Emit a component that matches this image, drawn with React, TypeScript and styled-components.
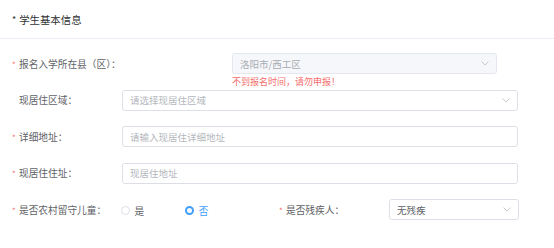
import React from "react";
import styled, { createGlobalStyle } from "styled-components";

const GlobalStyle = createGlobalStyle`
  body {
    margin: 0;
    background: #ffffff;
    font-family: "Noto Sans CJK SC", "Noto Sans", sans-serif;
  }
`;

const Page = styled.div`
  width: 554px;
  height: 248px;
  background: #fff;
  overflow: hidden;
`;

const Header = styled.div`
  height: 38px;
  padding: 0 12px;
  display: flex;
  align-items: center;
  border-bottom: 1px solid #ebeef5;
  font-size: 10.4px;
  color: #303133;
`;

const HeaderDot = styled.span`
  font-size: 9px;
  margin-right: 3px;
  color: #303133;
`;

const Form = styled.div`
  padding: 14px 0 0 12px;
  display: flex;
  flex-direction: column;
`;

const Row = styled.div<{ $tight?: boolean }>`
  display: flex;
  align-items: flex-start;
  margin-bottom: ${(p) => (p.$tight ? "0" : "15.5px")};
`;

const Column = styled.div<{ $width?: number }>`
  display: flex;
  align-items: flex-start;
  width: ${(p) => (p.$width ? `${p.$width}px` : "auto")};
`;

const Label = styled.div<{ $width?: number }>`
  width: ${(p) => p.$width ?? 110}px;
  flex-shrink: 0;
  display: flex;
  align-items: center;
  height: 21px;
  font-size: 9.7px;
  color: #606266;
  white-space: nowrap;
`;

const Star = styled.span`
  width: 7px;
  color: #f56c6c;
  font-size: 8px;
  line-height: 1;
  padding-top: 2px;
`;

const Field = styled.div<{ $width: number }>`
  width: ${(p) => p.$width}px;
  display: flex;
  flex-direction: column;
`;

const Box = styled.div<{ $disabled?: boolean }>`
  box-sizing: border-box;
  height: 21px;
  border: 1px solid ${(p) => (p.$disabled ? "#e4e7ed" : "#dcdfe6")};
  background: ${(p) => (p.$disabled ? "#f5f7fa" : "#fff")};
  border-radius: 2.7px;
  padding: 0 7px;
  display: flex;
  align-items: center;
  justify-content: space-between;
  font-size: 9.5px;
`;

const Value = styled.span<{ $tone: "placeholder" | "disabled" | "text" }>`
  color: ${(p) =>
    p.$tone === "text" ? "#606266" : p.$tone === "disabled" ? "#a8abb2" : "#b4b7bd"};
`;

const ErrorText = styled.div`
  height: 15.5px;
  line-height: 15.5px;
  font-size: 9px;
  color: #f56c6c;
`;

const Radios = styled.div`
  display: flex;
  align-items: center;
  height: 21px;
  padding-top: 1px;
  margin-left: -1px;
`;

const RadioItem = styled.div<{ $checked?: boolean }>`
  display: flex;
  align-items: center;
  margin-right: 41px;
  font-size: 9.7px;
  color: ${(p) => (p.$checked ? "#409eff" : "#606266")};
`;

const RadioDot = styled.span<{ $checked?: boolean }>`
  box-sizing: border-box;
  width: 9px;
  height: 9px;
  border-radius: 50%;
  margin-right: 4.5px;
  border: ${(p) => (p.$checked ? "2.6px solid #409eff" : "1px solid #dcdfe6")};
  background: #fff;
`;

const Chevron = () => (
  <svg width="8" height="5" viewBox="0 0 8 5" fill="none">
    <path d="M0.6 0.6L4 4L7.4 0.6" stroke="#c0c4cc" strokeWidth="0.9" />
  </svg>
);

const Select = ({
  value,
  tone,
  disabled,
}: {
  value: string;
  tone: "placeholder" | "disabled" | "text";
  disabled?: boolean;
}) => (
  <Box $disabled={disabled}>
    <Value $tone={tone}>{value}</Value>
    <Chevron />
  </Box>
);

export default function App() {
  return (
    <Page>
      <GlobalStyle />
      <Header>
        <HeaderDot>*</HeaderDot>学生基本信息
      </Header>
      <Form>
        <Row $tight>
          <Label $width={220}>
            <Star>*</Star>报名入学所在县（区）：
          </Label>
          <Field $width={265}>
            <Select value="洛阳市/西工区" tone="disabled" disabled />
            <ErrorText>不到报名时间，请勿申报！</ErrorText>
          </Field>
        </Row>
        <Row>
          <Label>
            <Star />现居住区域：
          </Label>
          <Field $width={396}>
            <Select value="请选择现居住区域" tone="placeholder" />
          </Field>
        </Row>
        <Row>
          <Label>
            <Star>*</Star>详细地址：
          </Label>
          <Field $width={396}>
            <Box>
              <Value $tone="placeholder">请输入现居住详细地址</Value>
            </Box>
          </Field>
        </Row>
        <Row>
          <Label>
            <Star>*</Star>现居住住址：
          </Label>
          <Field $width={396}>
            <Box>
              <Value $tone="placeholder">现居住地址</Value>
            </Box>
          </Field>
        </Row>
        <Row>
          <Column $width={267}>
            <Label>
              <Star>*</Star>是否农村留守儿童：
            </Label>
            <Radios>
              <RadioItem>
                <RadioDot />是
              </RadioItem>
              <RadioItem $checked>
                <RadioDot $checked />否
              </RadioItem>
            </Radios>
          </Column>
          <Column>
            <Label>
              <Star>*</Star>是否残疾人：
            </Label>
            <Field $width={130}>
              <Select value="无残疾" tone="text" />
            </Field>
          </Column>
        </Row>
      </Form>
    </Page>
  );
}
